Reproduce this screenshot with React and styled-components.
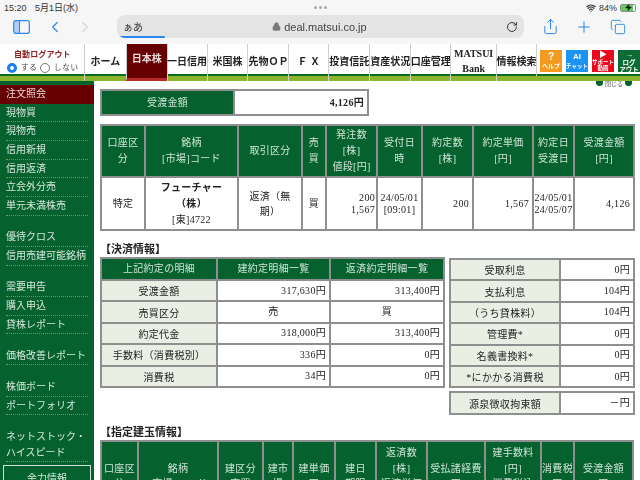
import React from "react";
import styled, { createGlobalStyle } from "styled-components";
import {
  ChevronLeft,
  ChevronRight,
  Lock,
  RotateCw,
  Share,
  Plus,
  Copy,
  Wifi,
  Zap,
} from "lucide-react";

const FONT = `"Liberation Serif", "Noto Sans CJK JP", serif`;
const UI_FONT = `"Liberation Sans", "Noto Sans CJK JP", sans-serif`;
const GREEN = "#05622f";
const LINE = "#8f8f8f";

const GlobalStyle = createGlobalStyle`
  html, body {
    margin: 0;
    padding: 0;
    height: 480px;
    overflow: hidden;
    background: #fff;
  }
  * { box-sizing: border-box; }
`;

const navItems = [
  { label: "ホーム", w: 42 },
  { label: "日本株", w: 41, active: true },
  { label: "一日信用", w: 40 },
  { label: "米国株", w: 41 },
  { label: "先物ＯＰ", w: 41 },
  { label: "Ｆ Ｘ", w: 40 },
  { label: "投資信託", w: 41 },
  { label: "資産状況", w: 41 },
  { label: "口座管理", w: 40 },
  { label: "MATSUI Bank", w: 46, latin: true },
  { label: "情報検索", w: 40 },
];

const sideMenu = [
  { label: "注文照会", active: true },
  { label: "現物買" },
  { label: "現物売" },
  { label: "信用新規" },
  { label: "信用返済" },
  { label: "立会外分売" },
  { label: "単元未満株売" },
  { gap: true },
  { label: "優待クロス" },
  { label: "信用売建可能銘柄" },
  { gap: true },
  { label: "需要申告" },
  { label: "購入申込" },
  { label: "貸株レポート" },
  { gap: true },
  { label: "価格改善レポート" },
  { gap: true },
  { label: "株価ボード" },
  { label: "ポートフォリオ" },
  { gap: true },
  { label: "ネットストック・ハイスピード", tall: true },
];

const orderCols = [44, 93, 64, 24, 51, 45, 51, 60, 41, 60];
const orderHead = [
  ["口座区分"],
  ["銘柄", "[市場]コード"],
  ["取引区分"],
  ["売買"],
  ["発注数", "[株]", "値段[円]"],
  ["受付日時"],
  ["約定数", "[株]"],
  ["約定単価", "[円]"],
  ["約定日", "受渡日"],
  ["受渡金額", "[円]"],
];

const settleRows = [
  ["受渡金額", "317,630円", "313,400円"],
  ["売買区分", "売", "買", true],
  ["約定代金", "318,000円", "313,400円"],
  ["手数料（消費税別）", "336円", "0円"],
  ["消費税", "34円", "0円"],
];

const interestRows = [
  ["受取利息", "0円"],
  ["支払利息", "104円"],
  ["（うち貸株料）", "104円"],
  ["管理費*", "0円"],
  ["名義書換料*", "0円"],
  ["*にかかる消費税", "0円"],
];

const lotCols = [37, 80, 45, 30, 42, 41, 51, 58, 56, 33, 59];
const lotHead = [
  ["口座区", "分"],
  ["銘柄", "[市場]コード"],
  ["建区分", "[売買]"],
  ["建市", "場"],
  ["建単価", "[円]"],
  ["建日", "[期限]"],
  ["返済数", "[株]", "返済単価", "[円]"],
  ["受払諸経費", "[円]"],
  ["建手数料", "[円]", "消費税込", "[円]"],
  ["消費税", "[円]"],
  ["受渡金額", "[円]"],
];

const Page = styled.div`
  width: 640px;
  height: 480px;
  overflow: hidden;
  font-family: ${FONT};
  color: #222;
  filter: blur(0.3px);
`;

const Chrome = styled.header`
  height: 44px;
  background: #f6f6f6;
  font-family: ${UI_FONT};
`;

const StatusBar = styled.div`
  height: 14px;
  padding: 1px 4px 0;
  display: grid;
  grid-template-columns: 1fr auto 1fr;
  align-items: center;
  font-size: 9px;
  color: #333;
`;

const StatusTime = styled.span`
  word-spacing: 6px;
`;

const Dots = styled.div`
  display: flex;
  gap: 2px;

  i {
    width: 3px;
    height: 3px;
    border-radius: 50%;
    background: #a9a9a9;
  }
`;

const StatusRight = styled.div`
  display: flex;
  justify-content: flex-end;
  align-items: center;
  gap: 3px;
`;

const Battery = styled.div`
  width: 16px;
  height: 8px;
  display: flex;
  align-items: center;
  justify-content: center;
  border: 1px solid #8c8c8c;
  border-radius: 2px;
  color: #111;
  background: linear-gradient(90deg, #5fcf5a 84%, transparent 84%);
`;

const ToolBar = styled.div`
  height: 30px;
  display: flex;
  align-items: center;
  padding-bottom: 5px;
  color: #2d86ee;
`;

const ToolLeft = styled.div`
  width: 117px;
  display: flex;
  align-items: center;
  padding-left: 13px;
`;

const PaneIcon = styled.svg`
  width: 17px;
  height: 14px;
  margin-right: 16px;
`;

const Address = styled.div`
  position: relative;
  width: 407px;
  height: 23px;
  border-radius: 8px;
  background: #e4e4e4;
  display: flex;
  align-items: center;
  padding: 0 6px;
  overflow: hidden;
  color: #333;
`;

const Progress = styled.div`
  position: absolute;
  left: 2px;
  bottom: 0;
  width: 46px;
  height: 2px;
  border-radius: 1px;
  background: #2d86ee;
`;

const AaText = styled.span`
  font-size: 10px;
  width: 96px;
`;

const Url = styled.span`
  display: flex;
  align-items: center;
  gap: 3px;
  width: 282px;
  padding-left: 54px;
  font-size: 11px;
  color: #444;
`;

const ToolRight = styled.div`
  flex: 1;
  display: grid;
  grid-template-columns: 34px 34px 34px;
  justify-items: center;
  align-items: center;
  padding-left: 9px;
`;

const TopNav = styled.nav`
  height: 37px;
  display: flex;
  background: #fff;
  border-bottom: 5px solid #8cb52d;
  box-shadow: inset 0 -2px 0 #0b6a24;
`;

const LogoutBox = styled.div`
  width: 84px;
  padding-top: 5px;
`;

const LogoutTitle = styled.div`
  padding-left: 14px;
  font-size: 8px;
  font-weight: 700;
  color: #8a2020;
  line-height: 11px;
  letter-spacing: 0.1px;
  white-space: nowrap;
`;

const RadioRow = styled.div`
  display: flex;
  align-items: center;
  padding-left: 7px;
  font-size: 7.5px;
  line-height: 12px;
  margin-top: 2px;
  letter-spacing: 0.8px;
  color: #444;
`;

const Radio = styled.span`
  width: 10px;
  height: 10px;
  margin-right: 4px;
  border-radius: 50%;
  background: #fff;
  border: ${(p) => (p.$on ? `3px solid #1a7bf2` : `1px solid #777`)};
`;

const RadioText = styled.span`
  width: ${(p) => p.$w}px;
`;

const NavCell = styled.a`
  width: ${(p) => p.$w}px;
  height: 37px;
  margin-bottom: -5px;
  padding-bottom: ${(p) => (p.$active ? 6 : 3)}px;
  display: flex;
  align-items: center;
  justify-content: center;
  text-align: center;
  white-space: ${(p) => (p.$latin ? "normal" : "nowrap")};
  font-size: 10px;
  font-weight: 700;
  line-height: ${(p) => (p.$latin ? 15 : 13)}px;
  color: ${(p) => (p.$active ? "#e8d8d8" : "#222")};
  background: ${(p) => (p.$active ? "#660000" : "transparent")};
  border-left: 1px solid #cfcfcf;
  border-bottom: ${(p) => (p.$active ? "3px solid #b52a2a" : "0")};
`;

const NavButtons = styled.div`
  display: flex;
  gap: 4px;
  padding: 6px 0 0 3px;
  border-left: 1px solid #cfcfcf;
  height: 32px;
`;

const NavButton = styled.div`
  width: 22px;
  height: 22px;
  background: ${(p) => p.$bg};
  color: #fff;
  font-family: ${UI_FONT};
  font-size: ${(p) => p.$small || 5.5}px;
  font-weight: 700;
  line-height: ${(p) => (p.$small ? 7 : 6)}px;
  text-align: center;
  white-space: nowrap;

  b {
    display: block;
    font-size: ${(p) => p.$big || 8}px;
    line-height: ${(p) => p.$iconLine || 9}px;
  }
`;

const Body = styled.div`
  display: flex;
`;

const SideBar = styled.aside`
  width: 94px;
  height: 400px;
  flex: none;
  padding-top: 4px;
  background: ${GREEN};
  font-size: 10px;
  color: #d5e5da;
  overflow: hidden;
`;

const SideItem = styled.div`
  height: ${(p) => (p.$tall ? 34 : 18.7)}px;
  margin: ${(p) => (p.$active ? "0" : "0 6px")};
  padding: ${(p) => (p.$active ? "0 6px" : "0")};
  padding-top: 1px;
  line-height: 16px;
  white-space: ${(p) => (p.$tall ? "normal" : "nowrap")};
  background: ${(p) => (p.$active ? "#660000" : "transparent")};
  color: ${(p) => (p.$active ? "#e8d8d8" : "inherit")};
  border-bottom: ${(p) => (p.$active ? "0" : "1px dotted #7d8f52")};
`;

const SideGap = styled.div`
  height: 12.5px;
`;

const SideBox = styled.div`
  margin: 3px 3px 0;
  height: 30px;
  border: 1px solid #cfe0d4;
  text-align: center;
  line-height: 26px;
`;

const Main = styled.main`
  flex: 1;
  min-width: 0;
  padding-left: 6px;
  font-size: 10px;
`;

const TopHint = styled.div`
  height: 8px;
  display: flex;
  justify-content: flex-end;
  align-items: flex-start;
  gap: 2px;
  padding-right: 8px;
  overflow: hidden;
  font-size: 6px;
  line-height: 6px;
  color: #556;
`;

const HintDot = styled.span`
  width: 7px;
  height: 5px;
  border-radius: 0 0 4px 4px;
  background: ${GREEN};
`;

const Table = styled.table`
  width: ${(p) => p.$w}px;
  table-layout: fixed;
  border-collapse: collapse;
  border: 2px solid ${LINE};
  letter-spacing: 0.3px;
`;

const Head = styled.th`
  height: ${(p) => p.$h}px;
  padding: 0 ${(p) => (p.$pad === undefined ? 2 : p.$pad)}px;
  background: ${GREEN};
  color: #cfe3d6;
  border: 2px solid ${LINE};
  font-weight: 400;
  text-align: center;
  vertical-align: middle;
  line-height: ${(p) => p.$lh || 16}px;
`;

const Label = styled.td`
  height: 21.4px;
  padding: 0;
  background: #e9efe3;
  border: 2px solid ${LINE};
  text-align: center;
  vertical-align: middle;
`;

const Cell = styled.td`
  height: ${(p) => p.$h || 21.4}px;
  padding: 0 ${(p) => (p.$pad === undefined ? 3 : p.$pad)}px;
  background: #fff;
  border: 2px solid ${LINE};
  text-align: ${(p) => p.$align || "right"};
  vertical-align: middle;
  line-height: ${(p) => p.$lh || 12}px;
  font-weight: ${(p) => (p.$bold ? 700 : 400)};
`;

const TotalTable = styled(Table)`
  margin-bottom: 8px;
`;

const SectionTitle = styled.h2`
  margin: ${(p) => p.$top}px 0 ${(p) => p.$bottom}px;
  height: 12px;
  font-size: 11px;
  line-height: 12px;
  font-weight: 700;
  color: #222;
`;

const SettleRow = styled.div`
  display: flex;
  gap: 4px;
  align-items: flex-start;
`;

const RightStack = styled.div`
  display: flex;
  flex-direction: column;
  gap: 3px;
  padding-top: 1px;
`;

const lines = (parts) =>
  parts.map((part, i) => <div key={i}>{part}</div>);

const Cols = ({ widths }) => (
  <colgroup>
    {widths.map((w, i) => (
      <col key={i} style={{ width: w }} />
    ))}
  </colgroup>
);

const App = () => {
  return (
    <Page>
      <GlobalStyle />
      <Chrome>
        <StatusBar>
          <StatusTime>15:20 5月1日(水)</StatusTime>
          <Dots>
            <i />
            <i />
            <i />
          </Dots>
          <StatusRight>
            <Wifi size={10} strokeWidth={3} />
            <span>84%</span>
            <Battery>
              <Zap size={7} fill="currentColor" />
            </Battery>
          </StatusRight>
        </StatusBar>
        <ToolBar>
          <ToolLeft>
            <PaneIcon viewBox="0 0 17 14">
              <rect x="0.7" y="0.7" width="15.6" height="12.6" rx="2" fill="none" stroke="currentColor" strokeWidth="1.2" />
              <rect x="1" y="1" width="5" height="12" rx="1" fill="currentColor" opacity="0.35" />
              <line x1="6.5" y1="1" x2="6.5" y2="13" stroke="currentColor" strokeWidth="1.1" />
            </PaneIcon>
            <ChevronLeft size={18} strokeWidth={1.6} />
            <ChevronRight size={18} strokeWidth={1.4} color="#c8c8c8" style={{ marginLeft: 12 }} />
          </ToolLeft>
          <Address>
            <AaText>ぁあ</AaText>
            <Url>
              <Lock size={9} fill="#777" color="#777" />
              deal.matsui.co.jp
            </Url>
            <RotateCw size={12} color="#333" style={{ marginLeft: 8 }} />
            <Progress />
          </Address>
          <ToolRight>
            <Share size={17} strokeWidth={1.4} />
            <Plus size={18} strokeWidth={1.4} />
            <Copy size={16} strokeWidth={1.4} style={{ transform: "scaleX(-1) rotate(90deg)" }} />
          </ToolRight>
        </ToolBar>
      </Chrome>

      <TopNav>
        <LogoutBox>
          <LogoutTitle>自動ログアウト</LogoutTitle>
          <RadioRow>
            <Radio $on />
            <RadioText $w={19}>する</RadioText>
            <Radio />
            <RadioText $w={30}>しない</RadioText>
          </RadioRow>
        </LogoutBox>
        {navItems.map((item) => (
          <NavCell key={item.label} $w={item.w} $active={item.active} $latin={item.latin}>
            {item.label}
          </NavCell>
        ))}
        <NavButtons>
          <NavButton $bg="#f49a1e" $small={6} $big={10} $iconLine={13}>
            <b>?</b>ヘルプ
          </NavButton>
          <NavButton $bg="#1c93f3" $iconLine={13}>
            <b>AI</b>チャット
          </NavButton>
          <NavButton $bg="#e8091c">
            <b>▶</b>サポート<br />動画
          </NavButton>
          <NavButton $bg="#0b6b35" $small={6.5}>
            <b>→</b>ログ<br />アウト
          </NavButton>
        </NavButtons>
      </TopNav>

      <Body>
        <SideBar>
          {sideMenu.map((item, i) =>
            item.gap ? (
              <SideGap key={i} />
            ) : (
              <SideItem key={i} $active={item.active} $tall={item.tall}>
                {item.label}
              </SideItem>
            )
          )}
          <SideBox>余力情報</SideBox>
        </SideBar>

        <Main>
          <TopHint>
            <HintDot />
            <span>閉じる</span>
            <HintDot />
          </TopHint>

          <TotalTable $w={267}>
            <Cols widths={[133, 134]} />
            <tbody>
              <tr>
                <Head $h={25}>受渡金額</Head>
                <Cell $h={25} $bold>4,126円</Cell>
              </tr>
            </tbody>
          </TotalTable>

          <Table $w={533}>
            <Cols widths={orderCols} />
            <thead>
              <tr>
                {orderHead.map((parts, i) => (
                  <Head key={i} $h={52}>{lines(parts)}</Head>
                ))}
              </tr>
            </thead>
            <tbody>
              <tr>
                <Cell $h={53} $align="center">特定</Cell>
                <Cell $h={53} $align="center" $lh={16}>
                  <strong>フューチャー</strong>
                  <div><strong>（株）</strong></div>
                  <div>[東]4722</div>
                </Cell>
                <Cell $h={53} $align="center" $lh={15}>返済（無期）</Cell>
                <Cell $h={53} $align="center">買</Cell>
                <Cell $h={53} $pad={1}>{lines(["200", "1,567"])}</Cell>
                <Cell $h={53} $align="center" $pad={0}>{lines(["24/05/01", "[09:01]"])}</Cell>
                <Cell $h={53}>200</Cell>
                <Cell $h={53}>1,567</Cell>
                <Cell $h={53} $align="center" $pad={0}>{lines(["24/05/01", "24/05/07"])}</Cell>
                <Cell $h={53}>4,126</Cell>
              </tr>
            </tbody>
          </Table>

          <SectionTitle $top={12} $bottom={2}>【決済情報】</SectionTitle>

          <SettleRow>
            <Table $w={343}>
              <Cols widths={[116, 113, 114]} />
              <thead>
                <tr>
                  <Head $h={22}>上記約定の明細</Head>
                  <Head $h={22}>建約定明細一覧</Head>
                  <Head $h={22}>返済約定明細一覧</Head>
                </tr>
              </thead>
              <tbody>
                {settleRows.map(([label, open, close, center]) => (
                  <tr key={label}>
                    <Label>{label}</Label>
                    <Cell $align={center ? "center" : "right"}>{open}</Cell>
                    <Cell $align={center ? "center" : "right"}>{close}</Cell>
                  </tr>
                ))}
              </tbody>
            </Table>

            <RightStack>
              <Table $w={184}>
                <Cols widths={[110, 74]} />
                <tbody>
                  {interestRows.map(([label, value]) => (
                    <tr key={label}>
                      <Label>{label}</Label>
                      <Cell>{value}</Cell>
                    </tr>
                  ))}
                </tbody>
              </Table>
              <Table $w={184}>
                <Cols widths={[110, 74]} />
                <tbody>
                  <tr>
                    <Label>源泉徴収拘束額</Label>
                    <Cell>－円</Cell>
                  </tr>
                </tbody>
              </Table>
            </RightStack>
          </SettleRow>

          <SectionTitle $top={11} $bottom={2}>【指定建玉情報】</SectionTitle>

          <Table $w={533}>
            <Cols widths={lotCols} />
            <thead>
              <tr>
                {lotHead.map((parts, i) => (
                  <Head key={i} $h={71} $pad={0} $lh={15.5}>{lines(parts)}</Head>
                ))}
              </tr>
            </thead>
          </Table>
        </Main>
      </Body>
    </Page>
  );
};

export default App;
